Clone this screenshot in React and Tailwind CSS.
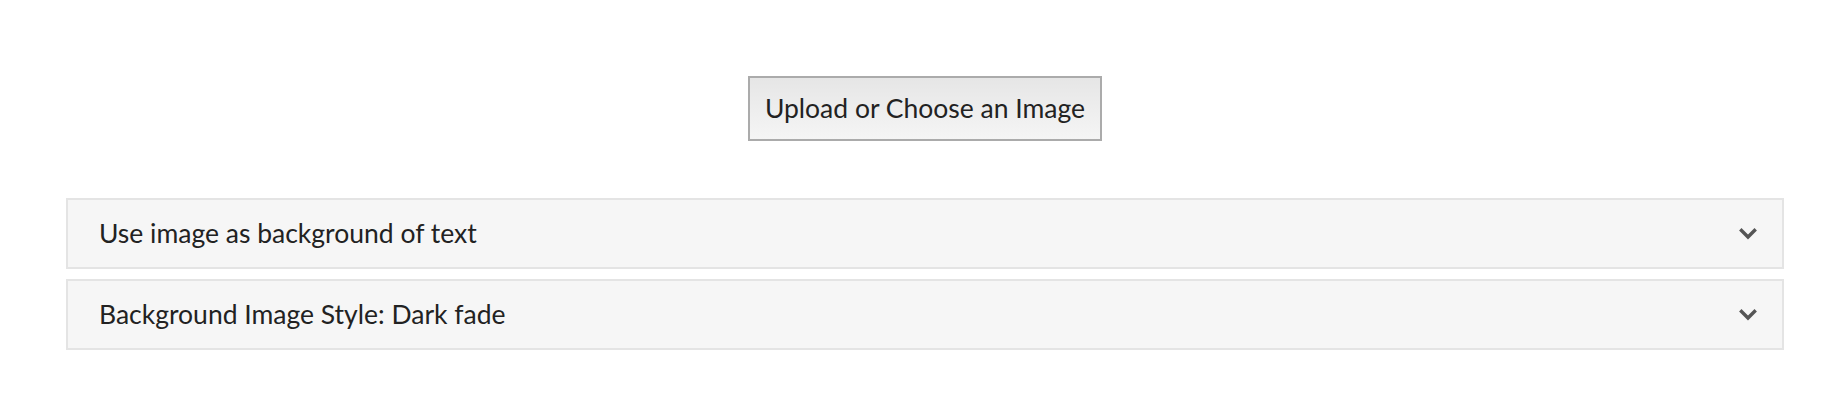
import React from "react";

function Chevron() {
  return (
    <svg width="18" height="12" viewBox="0 0 18 12" className="shrink-0">
      <path d="M2.5 2.5 L9 9 L15.5 2.5" fill="none" stroke="#555555" strokeWidth="3.4" strokeLinecap="square" strokeLinejoin="miter" />
    </svg>
  );
}

function Panel({ title }) {
  return (
    <div className="flex items-center justify-between h-[71px] border-2 border-[#e4e4e4] bg-[#f6f6f6] pl-[31px] pr-[25px]">
      <span className="text-[26.5px] text-[#222222] leading-none">{title}</span>
      <Chevron />
    </div>
  );
}

export default function App() {
  return (
    <div className="w-[1830px] h-[400px] bg-white pt-[76px] pl-[66px] pr-[46px]" style={{ fontFamily: "Lato, 'Open Sans', sans-serif" }}>
      <div className="flex justify-center">
        <button className="h-[65px] px-[15px] border-2 border-[#ababab] bg-gradient-to-b from-[#e6e6e6] to-[#f5f5f5] text-[26.5px] text-[#222222] leading-none">
          Upload or Choose an Image
        </button>
      </div>
      <div className="mt-[57px] flex flex-col gap-[10px]">
        <Panel title="Use image as background of text" />
        <Panel title="Background Image Style: Dark fade" />
      </div>
    </div>
  );
}
